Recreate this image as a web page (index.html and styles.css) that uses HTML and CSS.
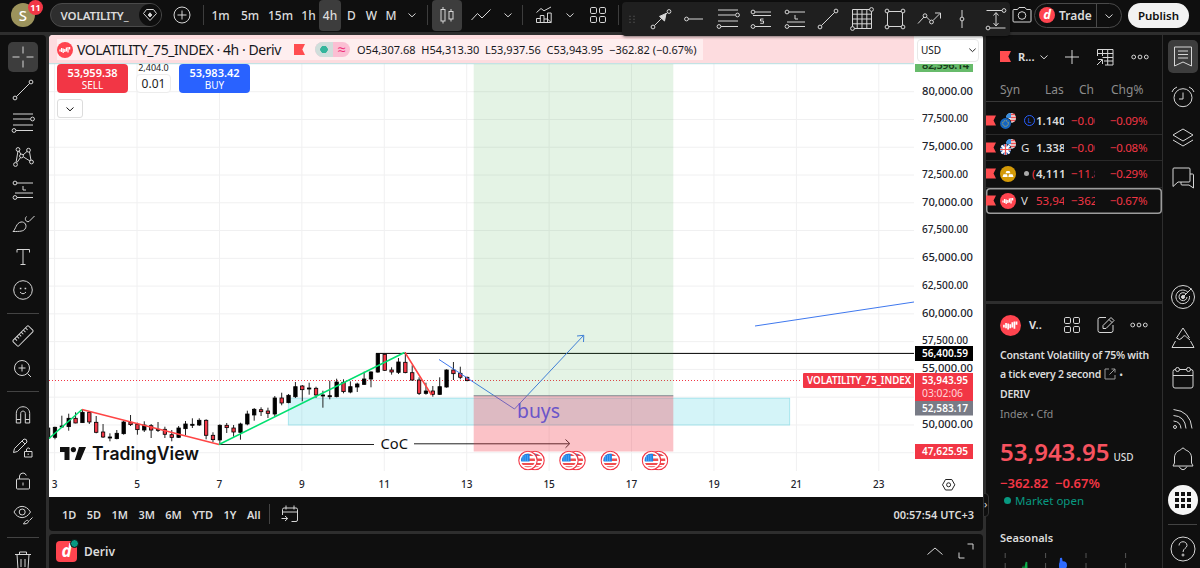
FILE: index.html
```html
<!DOCTYPE html>
<html lang="en">
<head>
    <meta charset="UTF-8">
    <meta name="viewport" content="width=device-width, initial-scale=1.0">
    <title>VOLATILITY_75_INDEX</title>
    <link rel="stylesheet" href="styles.css">
</head>
<body>

    <!-- shared symbols -->
    <svg class="defs">
        <symbol id="chevron" viewBox="-5 -5 10 10"><path d="M-3.5 -1.5 L0 1.8 L3.5 -1.5"/></symbol>
        <symbol id="dots" viewBox="-10 -5 20 10"><circle cx="-6.3" r="1.9"/><circle r="1.9"/><circle cx="6.3" r="1.9"/></symbol>
        <symbol id="tiles" viewBox="-10 -10 20 20"><rect x="-7.5" y="-7.5" width="6" height="6" rx="1.3"/><rect x="1.5" y="-7.5" width="6" height="6" rx="1.3"/><rect x="-7.5" y="1.5" width="6" height="6" rx="1.3"/><rect x="1.5" y="1.5" width="6" height="6" rx="1.3"/></symbol>
        <symbol id="flag" viewBox="0 0 11 11"><path d="M0 0H11L8.3 5.5L11 11H0Z" fill="#ff4d50" stroke="none"/></symbol>
        <symbol id="vol" viewBox="-8 -8 16 16"><circle r="8" fill="#ff444f" stroke="none"/><path d="M-5 -.5V1.5M-3.4 -2V2M-1.8 -1.5V3M-.2 -1V2M1.4 -2.5V1.5M3 -3V2.5M4.6 -3V-.5" stroke="#fff" stroke-width="1.3"/></symbol>
        <symbol id="us" viewBox="-10 -10 20 20">
            <circle r="9.2" fill="#fff" stroke="#f23645" stroke-width="1.1"/>
            <g clip-path="url(#round)" stroke="none"><path d="M-7 -7H7V7H-7Z" fill="#fff"/><path d="M-7 -7H7V-4.6H-7ZM-7 -2H7V.4H-7ZM-7 2.6H7V4.4H-7ZM-7 5.8H7V7H-7Z" fill="#ef4e50"/><path d="M-7 -7H1.6V1H-7Z" fill="#1b84e8"/><path d="M-5 -5V0M-2.8 -5V0M-.6 -5V0" stroke="#9fd0ff" stroke-width=".8" stroke-dasharray="1 1"/></g>
        </symbol>
        <symbol id="long" viewBox="-15 -15 30 30"><path d="M-6 -7H10M-8 3H10M-6 7.5H10M0 -4V0H3"/><circle cx="-8" cy="-7" r="1.9"/><circle cx="-8" cy="7.5" r="1.9"/></symbol>
        <symbol id="fib" viewBox="-15 -15 30 30"><path d="M-10 -9H10M-10 -4H7M-10 2H10M-7 7.5H10"/><circle cx="9.5" cy="-4" r="1.9"/><circle cx="-9" cy="7.5" r="1.9"/></symbol>
        <symbol id="trend" viewBox="-15 -15 30 30"><path d="M-6.7 6.7L6.7 -6.7"/><circle cx="-8" cy="8" r="1.9"/><circle cx="8" cy="-8" r="1.9"/></symbol>
        <clipPath id="round"><circle r="7"/></clipPath>
    </svg>

    <header class="topbar">
        <div class="avatar">S<span class="badge">11</span></div>
        <div class="search"><span>VOLATILITY_</span><i><svg viewBox="-11 -11 22 22"><path d="M-3.5 -5.5H3.5L6.5 -1.5L0 5.5L-6.5 -1.5Z"/><path d="M0 -2.2L1.8 0L0 2L-1.8 0Z" fill="#ddd"/></svg></i></div>
        <div><svg class="ic" viewBox="-15 -15 30 30"><circle r="8"/><path d="M-4.5 0H4.5M0 -4.5V4.5"/></svg></div>
        <div class="sep"></div>
        <div>1m</div><div>5m</div><div>15m</div><div>1h</div><div class="on">4h</div><div>D</div><div>W</div><div>M</div>
        <div><svg class="chev"><use href="#chevron"/></svg></div>
        <div class="sep"></div>
        <div class="on"><svg class="ic" viewBox="-15 -15 30 30"><path d="M-4 -8V-5.5M-4 6V8.5M4 -6V-3.5M4 4V6.5"/><rect x="-6" y="-5.5" width="4" height="11.5"/><rect x="2" y="-3.5" width="4" height="7.5"/></svg></div>
        <div><svg class="ic" viewBox="-15 -15 30 30"><path d="M-9.5 5L-3.5 -1.5L1 3L9.5 -5.5"/></svg></div>
        <div><svg class="chev"><use href="#chevron"/></svg></div>
        <div class="sep"></div>
        <div><svg class="ic" viewBox="-15 -15 30 30"><path d="M-7.5 7.5V3.5H-3.7V7.5M-3.7 4V.5H0V7.5M0 4H3.5V7.5M3.5 4V-2H7.2V7.5ZM-7.5 7.5H7.2M-7.5 -2.5L-3 -6.5L0 -4.2L7 -8"/></svg></div>
        <div><svg class="chev"><use href="#chevron"/></svg></div>
        <div><svg class="tiles"><use href="#tiles"/></svg></div>
        <div class="sep"></div>
        <div></div>
        <div><svg class="ic" viewBox="-15 -15 30 30"><path d="M-9 -4.5Q-9 -5.5 -8 -5.5H-4.5L-3 -7.5H3L4.5 -5.5H8Q9 -5.5 9 -4.5V6Q9 7 8 7H-8Q-9 7 -9 6Z"/><circle cy=".5" r="3.8"/></svg></div>
        <div class="trade"><b class="deriv">d</b><span>Trade</span><i><svg class="chev"><use href="#chevron"/></svg></i></div>
        <div class="publish">Publish</div>
    </header>

    <!-- floating favourites toolbar -->
    <div class="floatbar">
        <svg viewBox="-15 -15 30 30" class="grip"><path d="M-3 -5V6M3 -5V6" stroke-width="1.6" stroke-dasharray="1.6 3"/></svg>
        <svg viewBox="-15 -15 30 30"><path d="M-6.6 6.6L6.6 -6.6"/><path d="M5 -5.5L3.5 2L-1.5 -2.6Z" fill="#d6d6d6"/><circle cx="-8" cy="8" r="1.9"/><circle cx="8" cy="-7.5" r="1.9"/></svg>
        <svg viewBox="-15 -15 30 30"><circle cx="-7.5" r="1.9"/><path d="M-5.6 0H9"/></svg>
        <svg><use href="#fib"/></svg>
        <svg viewBox="-15 -15 30 30"><path d="M-6 -7H10M-8 -3.5H10M-6 7.5H10M2.5 0H-.5V2H2.5V4.3H-.8"/><circle cx="-8" cy="-7" r="1.9"/><circle cx="-8" cy="7.5" r="1.9"/></svg>
        <svg><use href="#long"/></svg>
        <svg><use href="#trend"/></svg>
        <svg viewBox="-15 -15 30 30"><path d="M-9.5 -9.5H9.5V9.5H-9.5ZM-4.8 -9.5V9.5M0 -9.5V9.5M4.8 -9.5V9.5M-9.5 -4.8H9.5M-9.5 0H9.5M-9.5 4.8H9.5"/><circle cx="9.5" cy="-9.5" r="1.9" fill="#1f1f1f"/><circle cx="-9.5" cy="9.5" r="1.9" fill="#1f1f1f"/></svg>
        <svg viewBox="-15 -15 30 30"><rect x="-7.5" y="-7.5" width="15" height="15"/><g fill="#1f1f1f"><circle cx="-8" cy="-8" r="1.9"/><circle cx="8" cy="-8" r="1.9"/><circle cx="-8" cy="8" r="1.9"/><circle cx="8" cy="8" r="1.9"/></g></svg>
        <svg viewBox="-15 -15 30 30"><path d="M-11 4.5L-5 -2M-2.5 -2L1 1.5M4 1.5L11 -5.5M6 -6H11.5V-.5"/><circle cx="-4" cy="-3.3" r="1.9"/><circle cx="2.5" cy="3" r="1.9"/></svg>
        <svg viewBox="-15 -15 30 30"><path d="M0 -9V-2M0 2V9"/><circle r="1.9"/></svg>
        <svg viewBox="-15 -15 30 30"><path d="M-9.5 -8.5H6M-6 9H9.5M0 -6V6.5M-2.5 -3.5L0 -6.5L2.5 -3.5M-2.5 4L0 7L2.5 4"/><circle cx="8" cy="-8.5" r="1.9"/><circle cx="-8" cy="9" r="1.9"/></svg>
    </div>

    <div class="main">
        <nav class="tools">
            <div class="on"><svg class="ic" viewBox="-15 -15 30 30"><path d="M-10.5 0H-3.5M3.5 0H10.5M0 -10.5V-3.5M0 3.5V10.5"/></svg></div>
            <div><svg class="ic"><use href="#trend"/></svg></div>
            <div><svg class="ic"><use href="#fib"/></svg></div>
            <div><svg class="ic" viewBox="-15 -15 30 30"><path d="M-7 5.5L-5 -6M-6 5.5L-2.5 .5M-4 -6L-2 -2.5M0 -2L4.5 -6M6.5 -5L8 3.5M.5 0L7 4"/><circle cx="-7.5" cy="7.5" r="1.9"/><circle cx="-5" cy="-7.5" r="1.9"/><circle cx="-1.5" cy="-1" r="1.9"/><circle cx="5.5" cy="-6.8" r="1.9"/><circle cx="8.5" cy="5" r="1.9"/></svg></div>
            <div><svg class="ic"><use href="#long"/></svg></div>
            <div><svg class="ic" viewBox="-15 -15 30 30"><path d="M-10 7.5C-7 5 -7 -1 -2 -2C2 -2.5 4.5 1.5 2 5C.5 7.3 -3 7.5 -10 7.5ZM3.5 -7.5C1 -5 3 -1.5 6 -2.5L11.5 -8"/></svg></div>
            <div><svg class="ic" viewBox="-15 -15 30 30"><path d="M-6 -4.5V-7.5H6.5V-4.5M0 -7.5V7.5M-2.5 7.5H2.5"/></svg></div>
            <div><svg class="ic" viewBox="-15 -15 30 30"><circle r="9.3"/><path d="M-3 2Q0 5.5 3 2"/><path d="M-3.2 -1.5H-1.6M1.6 -1.5H3.2" stroke-width="1.6"/></svg></div>
            <hr>
            <div><svg class="ic" viewBox="-15 -15 30 30"><g transform="rotate(-45)"><rect x="-11" y="-4" width="22" height="8" rx="1.2"/><path d="M-7.5 -4V-1M-4.5 -4V-1M-1.5 -4V-1M1.5 -4V-1M4.5 -4V-1M7.5 -4V-1"/></g></svg></div>
            <div><svg class="ic" viewBox="-15 -15 30 30"><circle cx="-1" cy="-1" r="7.5"/><path d="M4.5 4.5L8 8M-4.5 -1H2.5M-1 -4.5V2.5"/></svg></div>
            <hr>
            <div><svg class="ic" viewBox="-15 -15 30 30"><path d="M-6.7 8V-1.5C-6.7 -10.5 6.7 -10.5 6.7 -1.5V8H2.3V-1.5C2.3 -4.7 -2.3 -4.7 -2.3 -1.5V8ZM-6.7 4.5H-2.3M2.3 4.5H6.7"/></svg></div>
            <div><svg class="ic" viewBox="-15 -15 30 30"><path d="M-9.5 4.5L-8.5 .5L1 -9Q4 -9.5 4 -6L-5.5 3.5ZM-1 -7L2 -4M1.5 3.5H9V9H1.5ZM3.5 3.5V1Q5 -1.5 7 1M5.2 5.5V7"/></svg></div>
            <div><svg class="ic" viewBox="-15 -15 30 30"><rect x="-6.5" y="-2" width="13" height="10" rx="1"/><path d="M-3.5 -2V-5Q-3 -8 0 -8Q2.5 -8 3.3 -5.5M0 1.5V4.5"/></svg></div>
            <div><svg class="ic" viewBox="-15 -15 30 30"><path d="M-9 -3C-5 -10.5 3 -10.5 7.5 -3C3 4.5 -5 4.5 -9 -3ZM.5 9C3 4 6 5 5.5 7Q4.5 9 .5 9ZM6.5 5.5L9.5 2.5"/><circle cx="-.8" cy="-3" r="3"/></svg></div>
            <hr>
            <div><svg class="ic" viewBox="-15 -15 30 30"><path d="M-8 -5.5H8M-3.5 -5.5V-8H3.5V-5.5M-6 -5.5L-5 9H5L6 -5.5M-2 -1V7M2 -1V7"/></svg></div>
        </nav>

        <section class="center">
            <div class="chart">
                <svg id="plot" viewBox="49 35 934 462" width="934" height="462">
                    <g id="grid"></g>
                    <rect x="49" y="35" width="865" height="28.5" fill="#fddcdf"/>
                    <path d="M49 63.7H914" stroke="#b5dfe2"/>
                    <rect x="288.3" y="398.2" width="501.4" height="26.8" fill="#00bcd4" fill-opacity=".17" stroke="#9ae2ea" stroke-width=".8"/>
                    <path d="M219 444.5H374M414 443.8H569" stroke="#222"/>
                    <path d="M565.5 439.5L569.8 443.6L565.5 447.8" stroke="#222" fill="none"/>
                    <path d="M376 353.4H914" stroke="#000"/>
                    <path d="M49 380.5H802" stroke="#f23645" stroke-dasharray="1 2"/>
                    <g id="candles"></g>
                    <path d="M49 438.5L82 409.5M219 444.5L404.5 352.5" stroke="#00e070" stroke-width="1.5"/>
                    <path d="M82 409.5L219 444.5M405 352.5L431.5 395" stroke="#ff4545" stroke-width="1.5"/>
                    <path d="M439 359.5L514.5 409L583.5 335.5M577 336L583.8 335.3L583.5 342" stroke="#3f78ee" fill="none"/>
                    <path d="M755 326L914 302" stroke="#3f78ee"/>
                    <rect x="473.7" y="64" width="199.6" height="332" fill="#4caf50" fill-opacity=".15"/>
                    <rect x="473.7" y="396" width="199.6" height="55.5" fill="#f23645" fill-opacity=".3"/>
                    <path d="M473.7 395.8H673.3" stroke="#787b86"/>
                    <text x="517" y="418" font-size="20" textLength="43" lengthAdjust="spacingAndGlyphs" fill="#6b55c9">buys</text>
                    <text x="380.5" y="449" font-size="15" textLength="27.5" lengthAdjust="spacingAndGlyphs" fill="#111">CoC</text>
                    <g id="events"></g>
                    <g fill="#111"><path d="M60 447H69.5V460H64.5V452H60ZM79 447H86L80.5 460H74.8Z"/><circle cx="73.4" cy="449.6" r="2.6"/></g>
                    <text class="brand" x="92" y="460" textLength="107" lengthAdjust="spacingAndGlyphs">TradingView</text>
                    <rect x="914" y="35" width="69" height="462" fill="#fff"/>
                    <g id="prices"></g>
                    <g id="days"></g>
                    <g class="tag">
                        <rect x="915" y="64" width="58" height="8" fill="#67bb6b"/>
                        <text x="922" y="69" textLength="47" fill="#163a18" clip-path="url(#below)">82,596.14</text>
                        <clipPath id="below"><rect x="915" y="65" width="60" height="8"/></clipPath>
                        <rect x="915" y="346" width="58" height="15"/>
                        <text x="922" y="357" textLength="46" lengthAdjust="spacingAndGlyphs">56,400.59</text>
                        <rect x="915" y="373" width="58" height="28" fill="#f23645"/>
                        <text x="922" y="384" textLength="46" lengthAdjust="spacingAndGlyphs">53,943.95</text>
                        <text x="922" y="396.5" textLength="41" lengthAdjust="spacingAndGlyphs" class="timer">03:02:06</text>
                        <rect x="915" y="401" width="58" height="14.5" fill="#787b86"/>
                        <text x="922" y="411.5" textLength="46" lengthAdjust="spacingAndGlyphs">52,583.17</text>
                        <rect x="915" y="444" width="58" height="15" fill="#f23645"/>
                        <text x="922" y="455" textLength="46" lengthAdjust="spacingAndGlyphs">47,625.95</text>
                        <rect x="803" y="373" width="111" height="15" rx="1" fill="#f23645"/>
                        <text x="807" y="384" textLength="104" lengthAdjust="spacingAndGlyphs">VOLATILITY_75_INDEX</text>
                    </g>
                    <path d="M942.5 484.8L945.5 479.5H951.8L954.8 484.8L951.8 490H945.5Z" fill="none" stroke="#222"/><circle cx="948.6" cy="484.8" r="2" fill="none" stroke="#222"/>
                </svg>
                <div class="legend">
                    <svg class="logo"><use href="#vol"/></svg>
                    <span class="title">VOLATILITY_75_INDEX · 4h · Deriv</span>
                    <svg class="flag"><use href="#flag"/></svg>
                    <span class="status"><i></i><em>≈</em></span>
                    <span class="ohlc">O54,307.68&nbsp; H54,313.30&nbsp; L53,937.56&nbsp; C53,943.95&nbsp; −362.82 (−0.67%)</span>
                </div>
                <div class="order">
                    <div class="sell"><b>53,959.38</b><span>SELL</span></div>
                    <div class="qty"><span>2,404.0</span><b>0.01</b></div>
                    <div class="buy"><b>53,983.42</b><span>BUY</span></div>
                </div>
                <div class="collapse"><svg class="chev"><use href="#chevron"/></svg></div>
                <div class="currency"><span>USD</span><svg class="chev"><use href="#chevron"/></svg></div>
            </div>
            <div class="ranges">
                <span>1D</span><span>5D</span><span>1M</span><span>3M</span><span>6M</span><span>YTD</span><span>1Y</span><span>All</span>
                <div class="sep"></div>
                <svg class="ic" viewBox="-15 -15 30 30"><path d="M-7.5 1V-4.5Q-7.5 -6 -6 -6H6Q7.5 -6 7.5 -4.5V6Q7.5 7.5 6 7.5H1.5M-7.5 -2H7.5M-4 -8.5V-4.5M4 -8.5V-4.5M-8.5 4.5H-2.5M-5 2L-2.3 4.5L-5 7"/></svg>
                <span class="clock">00:57:54 UTC+3</span>
            </div>
            <div class="broker">
                <b class="deriv">d</b><span>Deriv</span>
                <svg class="ic up" viewBox="-15 -15 30 30"><path d="M-7.5 3.5L0 -3L7.5 3.5"/></svg>
                <svg class="ic" viewBox="-15 -15 30 30"><path d="M1.5 -7H7V-1.5M-7 1.5V7H-1.5"/></svg>
            </div>
        </section>

        <div class="gutter"><i>›</i></div>

        <aside class="side">
            <div class="watch">
                <div class="head">
                    <svg class="flag"><use href="#flag"/></svg><b>R...</b>
                    <svg class="chev"><use href="#chevron"/></svg>
                    <svg class="ic plus" viewBox="-15 -15 30 30"><path d="M-7 0H7M0 -7V7"/></svg>
                    <svg class="ic" viewBox="-15 -15 30 30"><path d="M-7.5 -1V-7.5H8V8H0M-7.5 -3.5H8M-2.5 -7.5V-1M2.7 -7.5V8M-2.5 .5H8M-1 4H8M-8 8L-3 3M-7 2.5H-2.5V7"/></svg>
                    <svg class="dots"><use href="#dots"/></svg>
                </div>
                <div class="cols"><span>Syn</span><span>Las</span><span>Ch</span><span>Chg%</span></div>
                <div class="row">
                    <svg class="flag"><use href="#flag"/></svg>
                    <svg class="pair" viewBox="0 0 16 16"><circle cx="11" cy="5" r="5" fill="#e8e8e8"/><path d="M11 1.5H15M11 4.5H16M8 7.5H15" stroke="#ef4e50" stroke-width="1.5"/><path d="M6 4A5 5 0 0 1 11 0V5H6Z" fill="#3b8fe0"/><circle cx="5.5" cy="10.5" r="6" fill="#0f0f0f"/><circle cx="5.5" cy="10.5" r="5.4" fill="#1565c0"/><circle cx="5.5" cy="10.5" r="2.8" fill="none" stroke="#e8c840" stroke-dasharray="1 1.2"/></svg>
                    <span class="sym"><em class="ell">L</em></span><b>1.140</b><span class="neg">−0.00</span><span class="neg pct">−0.09%</span>
                </div>
                <div class="row">
                    <svg class="flag"><use href="#flag"/></svg>
                    <svg class="pair" viewBox="0 0 16 16"><circle cx="11" cy="5" r="5" fill="#e8e8e8"/><path d="M11 1.5H15M11 4.5H16M8 7.5H15" stroke="#ef4e50" stroke-width="1.5"/><path d="M6 4A5 5 0 0 1 11 0V5H6Z" fill="#3b8fe0"/><circle cx="5.5" cy="10.5" r="6" fill="#0f0f0f"/><circle cx="5.5" cy="10.5" r="5.4" fill="#2c62b8"/><path d="M1.5 6.5L9.5 14.5M9.5 6.5L1.5 14.5M5.5 5V16M0 10.5H11" stroke="#fff" stroke-width="2"/><path d="M5.5 5V16M0 10.5H11" stroke="#ef4e50" stroke-width="1.2"/></svg>
                    <span class="sym">G</span><b>1.338</b><span class="neg">−0.00</span><span class="neg pct">−0.08%</span>
                </div>
                <div class="row">
                    <svg class="flag"><use href="#flag"/></svg>
                    <svg class="pair" viewBox="0 0 16 16"><circle cx="8" cy="8" r="8" fill="#d49a08"/><path d="M5.5 7.3L6.5 5H9.5L10.5 7.3ZM2.5 11L3.5 8.3H7L7.7 11ZM8.3 11L9 8.3H12.5L13.5 11Z" fill="#fff" stroke="none"/></svg>
                    <span class="sym"><em class="spot"></em><em class="ring">(</em></span><b>4,111</b><span class="neg">−11.8</span><span class="neg pct">−0.29%</span>
                </div>
                <div class="row active">
                    <svg class="flag"><use href="#flag"/></svg>
                    <svg class="pair"><use href="#vol"/></svg>
                    <span class="sym">V</span><span class="neg">53,94</span><span class="neg">−362</span><span class="neg pct">−0.67%</span>
                </div>
            </div>

            <div class="details">
                <div class="head">
                    <svg class="logo"><use href="#vol"/></svg><b>V..</b>
                    <svg class="tiles"><use href="#tiles"/></svg>
                    <svg class="ic" viewBox="-15 -15 30 30"><path d="M0 -7.5H-6Q-8 -7.5 -8 -5.5V5.5Q-8 7.5 -6 7.5H5Q7 7.5 7 5.5V0M-3 3.5V.5L5 -7.5L8 -4.5L0 3.5ZM3 -5.5L6 -2.5"/></svg>
                    <svg class="dots"><use href="#dots"/></svg>
                </div>
                <p class="desc">Constant Volatility of 75% with<br>a tick every 2 second <svg viewBox="-7 -7 14 14"><path d="M-1 -5H-5V5H5V1M1.5 -5H5V-1.5M5 -5L-.5 .5"/></svg><small> •</small><br>DERIV</p>
                <p class="kind">Index <small>•</small> Cfd</p>
                <p class="price">53,943.95<span>USD</span></p>
                <p class="delta">−362.82&nbsp; −0.67%</p>
                <p class="open"><i></i>Market open</p>
                <h4>Seasonals</h4>
                <svg class="season" viewBox="986 544 176 24" width="176" height="24">
                    <path d="M1005.2 545V568M1045.6 545V568M1086 545V568M1125.6 545V568" stroke="#555" stroke-dasharray="5 5"/>
                    <path d="M1017 568L1019 564L1021 566L1023 560L1024 564L1026.5 554L1027 568" stroke="#0ab04a" stroke-width="1.6"/>
                    <path d="M1057 568L1060 561L1061 550L1063 561" stroke="#2f6bff" stroke-width="2"/><circle cx="1063" cy="557.3" r="4" fill="#2f6bff" stroke="none"/>
                </svg>
            </div>
        </aside>

        <nav class="rail">
            <div class="on"><svg class="ic" viewBox="-15 -15 30 30"><path d="M-8.5 -9.5H8.5V9.5L0 5.5L-8.5 9.5ZM-5 -5.5H5M-5 -2H5M-5 1.5H5"/></svg></div>
            <div><svg class="ic" viewBox="-15 -15 30 30"><circle cy=".7" r="9"/><path d="M0 -4.5V2H-4M-11 -5Q-10 -8.5 -6 -10M11 -5Q10 -8.5 6 -10"/></svg></div>
            <div><svg class="ic" viewBox="-15 -15 30 30"><path d="M-10 -2L0 -8L10 -2L0 4ZM-10 3L0 9L10 3"/></svg></div>
            <div><svg class="ic" viewBox="-15 -15 30 30"><path d="M-10 -9Q-10 -10 -9 -10H6Q7 -10 7 -9V3Q7 4 6 4H-5L-10 8.5ZM7 -4H9.5Q10.5 -4 10.5 -3V10L6 7H-1Q-2 7 -2 6V4"/></svg></div>
            <div class="space"></div>
            <div><svg class="ic" viewBox="-15 -15 30 30"><circle r="11.5"/><path d="M5 -4.5A6.8 6.8 0 1 0 6.5 -1M3 -3A4 4 0 1 0 4 0M0 0L8.5 -8.5"/><circle r="1.5" fill="#d6d6d6"/></svg></div>
            <div><svg class="ic" viewBox="-15 -15 30 30"><path d="M-6.5 0L0 -10L6.5 0M-6.5 0Q-3 3 -1 0Q1 -4 3.5 -1L7 2M-7.5 3L-11 9.5H11L7.5 3"/></svg></div>
            <div><svg class="ic" viewBox="-15 -15 30 30"><rect x="-10" y="-8.5" width="20" height="18.5" rx="2"/><path d="M-10 -2.5H10"/><circle cx="-5.5" cy="-8.5" r="2" fill="#0f0f0f"/><circle cx="5.5" cy="-8.5" r="2" fill="#0f0f0f"/></svg></div>
            <div><svg class="ic" viewBox="-15 -15 30 30"><circle cx="-8" cy="8" r="1.5"/><path d="M-9.5 2Q-2.5 2.5 -2 9.5M-9.5 -3.5Q2 -3 3 9.5M-9.5 -9.5Q7.5 -8 9 9.5"/></svg></div>
            <div><svg class="ic" viewBox="-15 -15 30 30"><path d="M-10 7H10L8.5 4V-2C8 -7 4 -8.5 2.5 -9Q0 -13 -2.5 -9C-4 -8.5 -8 -7 -8.5 -2V4ZM-4 7.5Q0 14 4 7.5"/></svg></div>
            <div><svg class="ic apps" viewBox="-15 -15 30 30"><circle r="15" fill="#f5f5f5" stroke="none"/><path d="M-8 -6H8M-8 0H8M-8 6H8" stroke="#0f0f0f" stroke-width="4" stroke-dasharray="4 2"/></svg></div>
            <hr>
            <div><svg class="ic" viewBox="-15 -15 30 30"><circle r="12"/><path d="M-4 -3.5C-4 -8.5 4 -8.5 4 -3.5C4 -1 0 -.5 0 3"/><circle cy="6" r="1"/></svg></div>
        </nav>
    </div>

    <script src="chart.js"></script>
</body>
</html>
```
FILE: chart.js
```js
const STEP = 6.87;
const FIRST_X = 48.1;

// [high, body top, body bottom, low, up], in thirds of a pixel below y = 310
const candles = [
    [352,354,384,386,1],[350,352,382,388,1],[317,348,351,353,1],[311,325,350,362,1],
    [307,325,339,340,0],[298,307,338,338,1],[304,307,336,342,0],[318,337,367,370,0],
    [342,366,381,384,0],[370,381,384,394,1],[360,370,386,388,1],[332,336,371,374,1],
    [315,337,344,348,0],[338,343,359,374,0],[334,345,360,366,1],[342,347,360,384,0],
    [336,358,361,366,1],[350,358,373,384,0],[360,374,382,394,0],[348,354,382,384,1],
    [333,342,356,376,1],[325,343,346,354,1],[325,331,345,348,1],[328,331,376,388,0],
    [367,376,389,396,0],[343,346,390,404,1],[339,346,353,369,0],[345,354,366,380,0],
    [338,342,367,389,1],[302,312,342,346,1],[294,298,315,332,1],[292,299,305,318,0],
    [293,303,310,324,0],[258,264,312,320,1],[248,264,279,286,0],[252,256,278,280,1],
    [216,230,260,264,1],[225,228,239,274,0],[218,234,237,254,1],[230,235,255,264,0],
    [242,255,258,293,1],[212,257,260,268,1],[206,216,260,262,1],[208,217,245,250,0],
    [214,230,246,250,1],[218,222,231,246,1],[185,207,223,225,1],[184,186,207,232,1],
    [130,131,186,188,1],[130,133,181,183,0],[172,180,186,194,0],[144,156,187,192,1],
    [126,157,188,190,0],[166,188,210,212,0],[202,210,250,255,0],[218,243,250,254,1],
    [228,243,253,260,0],[202,230,253,255,1],[178,180,231,233,1],[156,180,191,210,0],
    [170,190,202,208,0],[200,202,212,214,0]
];

const y = v => (310 + v / 3).toFixed(1);

document.getElementById('candles').innerHTML = candles.map((c, i) => {
    const x = FIRST_X + i * STEP;
    const h = Math.max((c[2] - c[1]) / 3, 1);
    const fill = c[4] ? '#000' : '#f23645';
    return `<path d="M${x} ${y(c[0])}V${y(c[3])}" stroke="#222"/>
        <rect x="${x - 1.7}" y="${y(c[1])}" width="3.4" height="${h}" fill="${fill}" stroke="#000" stroke-width=".8"/>`;
}).join('');

// grid, price scale and dates
let grid = '', prices = '', days = '';
for (let i = 0; i < 14; i++) {
    const gy = 91.7 + i * 27.77;
    grid += `<path d="M49 ${gy}H914"/>`;
    if (i === 11 || i === 13) continue;
    const value = (80000 - i * 2500).toLocaleString('en-US') + '.00';
    const wide = i % 2 === 0 || i === 10;
    prices += `<text x="922" y="${gy + (i === 10 ? 3 : 2.8)}" textLength="${wide ? 51 : 46}" lengthAdjust="spacingAndGlyphs">${value}</text>`;
}
for (let i = 0; i < 11; i++) {
    const gx = 54.6 + i * 82.42;
    grid += `<path d="M${gx} 35V471"/>`;
    days += `<text x="${gx}" y="488">${3 + i * 2}</text>`;
}
document.getElementById('grid').innerHTML = grid;
document.getElementById('prices').innerHTML = prices;
document.getElementById('days').innerHTML = days;

// economic events
document.getElementById('events').innerHTML = [535, 528, 576, 569, 610.3, 658.5, 651.5].map(x =>
    `<use href="#us" x="${x - 10}" y="450.5" width="20" height="20"/>`).join('');
```
FILE: styles.css
```css
* {
    box-sizing: border-box;
}
body {
    margin: 0;
    width: 1200px;
    height: 568px;
    overflow: hidden;
    background: #2e2e2e;
    color: #dbdbdb;
    font-family: "Noto Sans", "Open Sans", sans-serif;
    font-size: 12px;
    position: relative;
}
p, h4 {
    margin: 0;
}
i, em {
    font-style: normal;
}
svg {
    display: block;
    fill: none;
    stroke: #d6d6d6;
    flex: none;
}
.defs {
    position: absolute;
    width: 0;
    height: 0;
}
.ic {
    width: 30px;
    height: 30px;
}
.chev {
    width: 10px;
    height: 10px;
}
.tiles {
    width: 20px;
    height: 20px;
}
.dots {
    width: 20px;
    height: 10px;
}
.flag {
    width: 11px;
    height: 11px;
}

/* top bar */
.topbar {
    height: 32px;
    background: #0f0f0f;
    display: grid;
    grid-template-columns: 49px 113px 40px 2px 33px 26px 35px 21px 22px 21px 19px 20px 21px 10px 30px 38px 16px 12px 32px 20px 36px 4px 390px 23px 90px 5px 61px;
    align-items: center;
    justify-items: center;
    font-weight: 500;
}
.topbar > div {
    display: flex;
    align-items: center;
    justify-content: center;
    height: 30px;
    margin-top: -2px;
}
.topbar .on {
    background: #3d3d3d;
    border-radius: 4px;
    width: 100%;
    height: 31px;
}
.topbar .sep {
    width: 1px;
    height: 20px;
    background: #3d3d3d;
}
.topbar .avatar {
    position: relative;
    width: 24px;
    height: 24px;
    border-radius: 50%;
    background: #9c935c;
    color: #fff;
    font-size: 15px;
    margin-right: 3px;
}
.badge {
    position: absolute;
    left: 17px;
    top: -3px;
    width: 15px;
    height: 15px;
    border-radius: 8px;
    background: #f23645;
    font-size: 9px;
    font-weight: 700;
    line-height: 15px;
    text-align: center;
}
.topbar .search {
    width: 112px;
    height: 24px;
    border: 1px solid #4a4a4a;
    border-radius: 12px;
    background: #2e2e2e;
    justify-content: space-between;
    padding-left: 10px;
    font-weight: 600;
    font-size: 11.5px;
    letter-spacing: -.1px;
}
.search i {
    width: 22px;
    height: 22px;
    border-radius: 50%;
    background: #0f0f0f;
}
.topbar .trade {
    width: 88px;
    height: 25px;
    border: 1px solid #4a4a4a;
    border-radius: 13px;
    padding-left: 4px;
    font-weight: 600;
}
.trade span {
    flex: 1;
    padding-left: 4px;
}
.trade i {
    border-left: 1px solid #4a4a4a;
    height: 23px;
    width: 25px;
    padding: 7px;
}
.deriv {
    width: 16px;
    height: 16px;
    border-radius: 50%;
    background: #ff444f;
    color: #fff;
    font: italic 700 13px/15px "Noto Sans", sans-serif;
    text-align: center;
}
.topbar .publish {
    grid-column: 27;
    width: 61px;
    height: 25px;
    border-radius: 13px;
    background: #f2f2f2;
    color: #0f0f0f;
    font-weight: 600;
    font-size: 11.5px;
}
.floatbar {
    position: absolute;
    left: 622px;
    top: 2px;
    width: 388px;
    height: 34px;
    background: #1f1f1f;
    border-radius: 4px;
    box-shadow: 0 1px 3px rgba(0, 0, 0, .5);
    display: flex;
    align-items: center;
    gap: 3.5px;
    z-index: 3;
}
.floatbar svg {
    width: 30px;
    height: 30px;
}
.floatbar .grip {
    width: 20px;
    stroke: #6a6a6a;
}

/* body columns */
.main {
    display: grid;
    grid-template-columns: 46px 934px 3px 176px 38px;
    grid-template-columns: 46px 3px 934px 3px 176px 38px;
    height: 533px;
    margin-top: 3px;
}
.tools {
    background: #0f0f0f;
    padding-top: 5px;
    border-top-right-radius: 4px;
    grid-column: 1;
}
.tools div, .rail div {
    height: 33.4px;
    display: flex;
    align-items: center;
    justify-content: center;
}
.tools .on svg, .rail .on svg {
    background: #3d3d3d;
    border-radius: 5px;
}
.tools hr {
    width: 32px;
    height: 1px;
    border: 0;
    background: #434343;
    margin: 5.5px 7px;
}
.center {
    grid-column: 3;
    display: grid;
    grid-template-rows: 462px 34px 37px;
}
.chart {
    position: relative;
    background: #fff;
    border-radius: 4px 4px 0 0;
    overflow: hidden;
}
#plot text {
    stroke: none;
}
#grid path {
    stroke: #f0f0f1;
}
#prices text, #days text {
    fill: #22242c;
    font-size: 11px;
    font-weight: 500;
}
#days text {
    text-anchor: middle;
    font-size: 10px;
}
.tag rect {
    stroke: none;
    fill: #000;
}
.tag rect[fill="#f23645"] {
    fill: #f23645;
}
.tag rect[fill="#787b86"] {
    fill: #787b86;
}
.tag rect[fill="#67bb6b"] {
    fill: #67bb6b;
}
.tag text {
    fill: #fff;
    font-size: 11px;
    font-weight: 600;
}
.tag text[fill] {
    fill: #163a18;
}
.tag .timer {
    font-weight: 400;
    fill: #ffd5d8;
}
#plot .brand {
    font-family: Inter, sans-serif;
    font-size: 18px;
    font-weight: 600;
    fill: #111;
}
#plot rect:not([stroke]), #plot g[fill="#111"] {
    stroke: none;
}
.legend {
    position: absolute;
    left: 8px;
    top: 4px;
    width: 646px;
    height: 21px;
    display: flex;
    align-items: center;
    background: rgba(255, 255, 255, .5);
    color: #16181d;
    white-space: nowrap;
}
.legend .logo {
    width: 16px;
    height: 16px;
}
.title {
    width: 206px;
    margin: 0 11px 0 4px;
    font-size: 14px;
    letter-spacing: -.45px;
}
.status {
    display: flex;
    margin: 0 7px 0 10px;
    width: 35px;
    height: 15px;
    border-radius: 8px;
    overflow: hidden;
    background: #fbbfd3;
}
.status i {
    width: 18px;
    background: radial-gradient(circle, #35b59c 3.5px, #cfdedb 4px);
}
.status em {
    width: 17px;
    color: #f0307a;
    font-size: 15px;
    line-height: 14px;
    text-align: center;
}
.ohlc {
    font-size: 11px;
}
.order {
    position: absolute;
    left: 8px;
    top: 29px;
    display: flex;
    gap: 8px;
    text-align: center;
}
.order div {
    width: 71px;
    height: 29px;
    border-radius: 4px;
    color: #fff;
    display: flex;
    flex-direction: column;
    font-size: 10px;
    line-height: 12px;
    padding-top: 2px;
}
.order b {
    font-size: 11px;
    font-weight: 600;
    line-height: 13px;
}
.order .sell {
    background: #f23645;
}
.order .buy {
    background: #2962ff;
}
.order .qty {
    width: 35px;
    color: #222;
    padding: 0;
    font-size: 9px;
    line-height: 8px;
}
.qty b {
    border: 1px solid #ececec;
    border-radius: 4px;
    background: #fff;
    margin-top: 2px;
    font-size: 12px;
    font-weight: 400;
    line-height: 17px;
}
.collapse {
    position: absolute;
    left: 8px;
    top: 64px;
    width: 26px;
    height: 19px;
    border: 1px solid #dcdcdc;
    border-radius: 3px;
    background: #fff;
    padding: 4px 7px;
}
.collapse svg, .currency svg {
    stroke: #111;
}
.currency {
    position: absolute;
    left: 868px;
    top: 4px;
    width: 62px;
    height: 23px;
    border: 1px solid #e8e8e8;
    border-radius: 4px;
    background: #fff;
    color: #111;
    display: flex;
    align-items: center;
    justify-content: space-between;
    padding: 0 1px 2px 3px;
    font-size: 10px;
}
.currency .chev {
    width: 9px;
}
.ranges {
    background: #0f0f0f;
    border-radius: 0 0 4px 4px;
    display: flex;
    align-items: center;
    padding: 0 9px 0 13px;
    gap: 10.4px;
    font-size: 11px;
    font-weight: 600;
}
.ranges .sep {
    width: 1px;
    height: 20px;
    background: #434343;
    margin-left: -2px;
}
.ranges .ic {
    margin-left: -5px;
}
.clock {
    margin-left: auto;
}
.broker {
    background: #0f0f0f;
    border-radius: 4px 4px 0 0;
    margin-top: 3px;
    display: flex;
    align-items: center;
    padding: 0 2px 0 7px;
    font-weight: 600;
}
.broker .deriv {
    width: 21px;
    height: 21px;
    border-radius: 4px;
    font-size: 17px;
    line-height: 20px;
    margin-right: 7px;
    position: relative;
}
.broker .deriv::after {
    content: "";
    position: absolute;
    right: -2px;
    top: -2px;
    width: 7px;
    height: 7px;
    border: 1px solid #0f0f0f;
    border-radius: 50%;
    background: #089981;
}
.broker .up {
    margin-left: auto;
    margin-right: 1px;
}
.gutter {
    grid-column: 4;
    position: relative;
}
.gutter i {
    position: absolute;
    left: 0;
    top: 458px;
    width: 6px;
    height: 24px;
    background: #0f0f0f;
    border: 1px solid #333;
    border-radius: 0 4px 4px 0;
    line-height: 20px;
    font-size: 11px;
    z-index: 2;
}

/* watchlist */
.side {
    grid-column: 5;
    display: grid;
    grid-template-rows: 266px 1fr;
    gap: 3px;
    min-width: 0;
}
.watch, .details {
    background: #0f0f0f;
    overflow: hidden;
}
.head {
    display: flex;
    align-items: center;
}
.watch .head {
    height: 43px;
    padding-left: 14px;
}
.watch .head b {
    width: 17px;
    margin: 0 4px 0 7px;
    font-size: 11px;
}
.watch .plus {
    margin: 0 3px 0 8px;
}
.watch .head .dots {
    margin-left: 10px;
}
.cols, .row {
    display: grid;
    grid-template-columns: 14px 21px 15px 29px 6px 24px 15px 39px;
    align-items: center;
}
.cols {
    height: 24px;
    border-bottom: 1px solid #383838;
    color: #8c8c8c;
    grid-template-columns: 14px 45px 34px 32px 38px;
}
.cols span:first-child {
    grid-column: 2;
}
.row {
    height: 26.5px;
    border-bottom: 1px solid #2a2a2a;
    grid-template-columns: 14px 21px 15px 28px 7px 24px 15px 39px;
    font-size: 11.5px;
    white-space: nowrap;
}
.cols + .row {
    margin-top: 6px;
}
.row > b, .row > .neg {
    overflow: hidden;
    font-weight: 600;
}
.row > .neg {
    color: #f23645;
    font-weight: 400;
}
.row > .neg:nth-child(5) {
    grid-column: 6;
}
.row > .pct {
    grid-column: 8;
    letter-spacing: -.3px;
    overflow: visible;
}
.row .flag {
    width: 10px;
}
.pair {
    width: 16px;
    height: 16px;
    stroke: none;
}
.sym {
    display: flex;
    align-items: center;
    height: 16px;
}
.ell {
    width: 11px;
    height: 11px;
    margin-left: 3px;
    border: 1px solid #2962ff;
    border-radius: 50%;
    color: #2962ff;
    font-size: 7px;
    line-height: 9px;
    text-align: center;
}
.spot {
    width: 5px;
    height: 5px;
    margin: 0 3px;
    border-radius: 50%;
    background: #aaa;
}
.ring {
    color: #f23645;
}
.row.active {
    height: 26px;
    border: 0;
    border-radius: 4px;
    box-shadow: inset 0 0 0 1.5px #9c9c9c;
}

/* symbol details */
.details {
    padding-left: 14px;
    white-space: nowrap;
}
.details .head {
    height: 42px;
}
.details .logo {
    width: 21px;
    height: 21px;
}
.details .head b {
    width: 33px;
    margin-left: 8px;
    font-size: 11px;
    line-height: 16px;
}
.details .head .ic {
    margin-left: 9px;
}
.details .head .dots {
    margin-left: 8px;
}
.desc {
    font-size: 10.5px;
    font-weight: 600;
    line-height: 19.2px;
    letter-spacing: -.25px;
}
.desc svg {
    display: inline-block;
    width: 14px;
    height: 14px;
    stroke: #9a9a9a;
    vertical-align: -3px;
}
.kind {
    color: #8c8c8c;
    font-size: 10.5px;
    line-height: 18px;
}
.price {
    margin-top: 10px;
    font-size: 24px;
    font-weight: 600;
    line-height: 36px;
    color: #f7525f;
}
.price span {
    margin-left: 4px;
    font-size: 10px;
    font-weight: 500;
    color: #dbdbdb;
}
.delta {
    font-size: 13px;
    font-weight: 600;
    line-height: 16px;
    color: #f23645;
}
.open {
    display: flex;
    align-items: center;
    line-height: 20px;
    color: #089981;
    font-size: 11.5px;
}
.open i {
    width: 7px;
    height: 7px;
    margin: 0 4px 0 4px;
    border-radius: 50%;
    background: #089981;
}
.details h4 {
    margin-top: 19px;
    font-size: 11px;
    font-weight: 600;
    line-height: 16px;
}
.season {
    margin: 6px 0 0 -14px;
}

/* right rail */
.rail {
    grid-column: 6;
    background: #0f0f0f;
    border-left: 1px solid #2e2e2e;
    padding-top: 1px;
}
.rail div {
    height: 40.5px;
    padding-left: 3px;
}
.rail .on svg {
    height: 33px;
}
.rail .space {
    height: 79px;
}
.rail hr {
    width: 29px;
    height: 1px;
    border: 0;
    background: #434343;
    margin: 4px 0 4px 5px;
}
```
